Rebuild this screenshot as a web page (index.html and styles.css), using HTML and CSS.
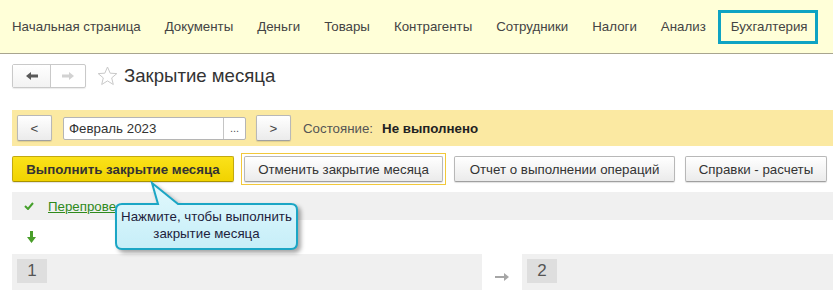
FILE: index.html
```html
<!DOCTYPE html>
<html lang="ru">

<head>
    <meta charset="UTF-8">
    <title>Закрытие месяца</title>
    <link rel="stylesheet" href="styles.css">
</head>

<body>
    <div class="nav">
        <span class="nav-item">Начальная страница</span>
        <span class="nav-item">Документы</span>
        <span class="nav-item">Деньги</span>
        <span class="nav-item">Товары</span>
        <span class="nav-item">Контрагенты</span>
        <span class="nav-item">Сотрудники</span>
        <span class="nav-item">Налоги</span>
        <span class="nav-item">Анализ</span>
        <span class="nav-item nav-item-active">Бухгалтерия</span>
    </div>

    <div class="title-row">
        <div class="history">
            <span class="history-btn">
                <svg width="12" height="8" viewBox="0 0 12 8"><path d="M0 4 L5 0 L5 2.5 L12 2.5 L12 5.5 L5 5.5 L5 8 Z" fill="#595959"/></svg>
            </span>
            <span class="history-btn">
                <svg width="12" height="8" viewBox="0 0 12 8"><path d="M12 4 L7 0 L7 2.5 L0 2.5 L0 5.5 L7 5.5 L7 8 Z" fill="#d2d2d2"/></svg>
            </span>
        </div>
        <svg class="star" width="21" height="20" viewBox="0 0 21 20">
            <path d="M10.5 1 L13.2 7.2 L19.8 7.6 L14.7 11.9 L16.3 18.5 L10.5 14.9 L4.7 18.5 L6.3 11.9 L1.2 7.6 L7.8 7.2 Z" fill="none" stroke="#c9c9c9" stroke-width="1"/>
        </svg>
        <h1 class="title">Закрытие месяца</h1>
    </div>

    <div class="period-bar">
        <span class="btn btn-small">&lt;</span>
        <div class="period-field">
            <span class="period-value">Февраль 2023</span>
            <span class="period-choose">...</span>
        </div>
        <span class="btn btn-small btn-next">&gt;</span>
        <span class="state-label">Состояние:</span>
        <span class="state-value">Не выполнено</span>
    </div>

    <div class="actions">
        <span class="btn btn-primary">Выполнить закрытие месяца</span>
        <span class="focus-frame"><span class="btn">Отменить закрытие месяца</span></span>
        <span class="btn btn-report">Отчет о выполнении операций</span>
        <span class="btn btn-help">Справки - расчеты</span>
    </div>

    <div class="steps">
        <div class="step-row step-row-gray">
            <svg class="icon-check" width="10" height="8" viewBox="0 0 10 8"><polyline points="1,4 4,7 9,1" fill="none" stroke="#46a02c" stroke-width="2"/></svg>
            <a class="step-link">Перепроведение</a>
        </div>
        <div class="step-row step-row-white">
            <svg class="icon-down" width="9" height="12" viewBox="0 0 9 12"><path d="M3 0 L6 0 L6 6 L9 6 L4.5 12 L0 6 L3 6 Z" fill="#4a9e2a"/></svg>
        </div>
        <div class="stages">
            <div class="stage stage-first">
                <span class="stage-num">1</span>
            </div>
            <div class="stage-arrow">
                <svg width="14" height="8" viewBox="0 0 14 8"><path d="M0 3 L9 3 L9 0 L14 4 L9 8 L9 5 L0 5 Z" fill="#a6a6a6"/></svg>
            </div>
            <div class="stage stage-second">
                <span class="stage-num">2</span>
            </div>
        </div>
    </div>

    <div class="hint">
        <svg class="hint-shape" width="196" height="78" viewBox="0 0 196 78">
            <defs>
                <linearGradient id="hintFill" x1="0" y1="0" x2="0" y2="1">
                    <stop offset="0" stop-color="#e2f9fd"/>
                    <stop offset="1" stop-color="#c6eef8"/>
                </linearGradient>
            </defs>
            <path d="M12 24 L48 24 L42 3 L68 24 L181 24 Q187 24 187 30 L187 63 Q187 69 181 69 L12 69 Q6 69 6 63 L6 30 Q6 24 12 24 Z" fill="url(#hintFill)" stroke="#1ba6c5" stroke-width="2"/>
        </svg>
        <div class="hint-text">Нажмите, чтобы выполнить<br>закрытие месяца</div>
    </div>
</body>

</html>
```

FILE: styles.css
```css
body {
    margin: 0;
    padding: 0;
    font-family: "Liberation Sans", Arial, sans-serif;
    font-size: 13.3px;
    color: #333;
    background: #fff;
    width: 833px;
    height: 290px;
    overflow: hidden;
    position: relative;
}

.nav {
    height: 53px;
    background: #ffffd8;
    border-bottom: 1px solid #a8a58f;
    display: flex;
    align-items: center;
    gap: 24px;
    padding-left: 12px;
}

.nav-item {
    color: #444;
    white-space: nowrap;
}

.nav-item-active {
    margin-left: -12px;
    padding: 0 7px 0 10px;
    height: 28px;
    line-height: 28px;
    border: 3px solid #0ea3c3;
}

.title-row {
    display: flex;
    align-items: center;
    padding: 10px 0 0 12px;
    height: 24px;
}

.history {
    display: flex;
    height: 22px;
    border: 1px solid #c9c9c9;
    border-radius: 2px;
    box-shadow: 0 1px 1px rgba(0, 0, 0, 0.08);
}

.history-btn {
    width: 37px;
    display: flex;
    align-items: center;
    justify-content: center;
}

.history-btn:first-child {
    width: 37px;
    border-right: 1px solid #c9c9c9;
    background: linear-gradient(#fff, #f2f2f2);
}

.history-btn:last-child {
    width: 34px;
}

.star {
    margin-left: 11px;
}

.title {
    margin: 0 0 0 6px;
    font-size: 18.6px;
    font-weight: normal;
    color: #333;
}

.period-bar {
    margin: 22px 0 0 12px;
    height: 36px;
    background: #fbe9a2;
    display: flex;
    align-items: center;
    padding-left: 5px;
}

.btn {
    display: inline-flex;
    align-items: center;
    justify-content: center;
    box-sizing: border-box;
    height: 26px;
    padding: 0 15px;
    background: linear-gradient(#ffffff, #ebebeb);
    border: 1px solid #b8b8b8;
    border-bottom-color: #a0a0a0;
    border-radius: 2px;
    box-shadow: 0 1px 1px rgba(0, 0, 0, 0.12);
    color: #333;
    white-space: nowrap;
}

.btn-small {
    width: 35px;
    padding: 0;
    color: #444;
}

.btn-next {
    margin-left: 10px;
}

.period-field {
    display: flex;
    margin-left: 11px;
    height: 23px;
    box-sizing: border-box;
    border: 1px solid #b5b5b5;
    border-radius: 2px;
    background: #fff;
}

.period-value {
    width: 159px;
    padding-left: 5px;
    box-sizing: border-box;
    line-height: 21px;
    color: #333;
}

.period-choose {
    width: 21px;
    border-left: 1px solid #c5c5c5;
    text-align: center;
    line-height: 21px;
    font-size: 11px;
    color: #555;
}

.state-label {
    margin-left: 12px;
    color: #555;
}

.state-value {
    margin-left: 9px;
    font-weight: bold;
    color: #222;
}

.actions {
    display: flex;
    align-items: center;
    margin: 10px 0 0 12px;
    height: 26px;
}

.btn-primary {
    width: 222px;
    background: linear-gradient(#fbe21a, #f1d300);
    border-color: #c2a910;
    border-bottom-color: #a89200;
    font-weight: bold;
    color: #333;
}

.focus-frame {
    margin-left: 7px;
    padding: 2px;
    border: 1px solid #f2c83a;
    display: flex;
}

.focus-frame .btn {
    width: 199px;
}

.btn-report {
    width: 221px;
    margin-left: 8px;
}

.btn-help {
    width: 142px;
    margin-left: 10px;
}

.steps {
    margin: 10px 0 0 12px;
}

.step-row {
    display: flex;
    align-items: center;
}

.step-row-gray {
    height: 28px;
    background: #f0f0f0;
}

.icon-check {
    margin-left: 12px;
}

.step-link {
    margin-left: 14px;
    color: #2e8a1c;
    text-decoration: underline;
}

.step-row-white {
    height: 34px;
}

.icon-down {
    margin-left: 15px;
}

.stages {
    display: flex;
    height: 36px;
}

.stage {
    background: #f0f0f0;
    padding: 5px;
}

.stage-first {
    width: 460px;
}

.stage-second {
    flex: 1;
}

.stage-arrow {
    width: 40px;
    display: flex;
    justify-content: center;
    align-items: center;
    padding-top: 10px;
}

.stage-num {
    display: block;
    width: 30px;
    height: 24px;
    line-height: 24px;
    text-align: center;
    background: #dedede;
    color: #555;
    font-size: 17px;
}

.hint {
    position: absolute;
    left: 110px;
    top: 180px;
    width: 196px;
    height: 78px;
}

.hint-shape {
    display: block;
    filter: drop-shadow(3px 3px 2px rgba(0, 0, 0, 0.35));
}

.hint-text {
    position: absolute;
    left: 6px;
    top: 28px;
    width: 181px;
    text-align: center;
    line-height: 17px;
    color: #1e1e3c;
}
```
